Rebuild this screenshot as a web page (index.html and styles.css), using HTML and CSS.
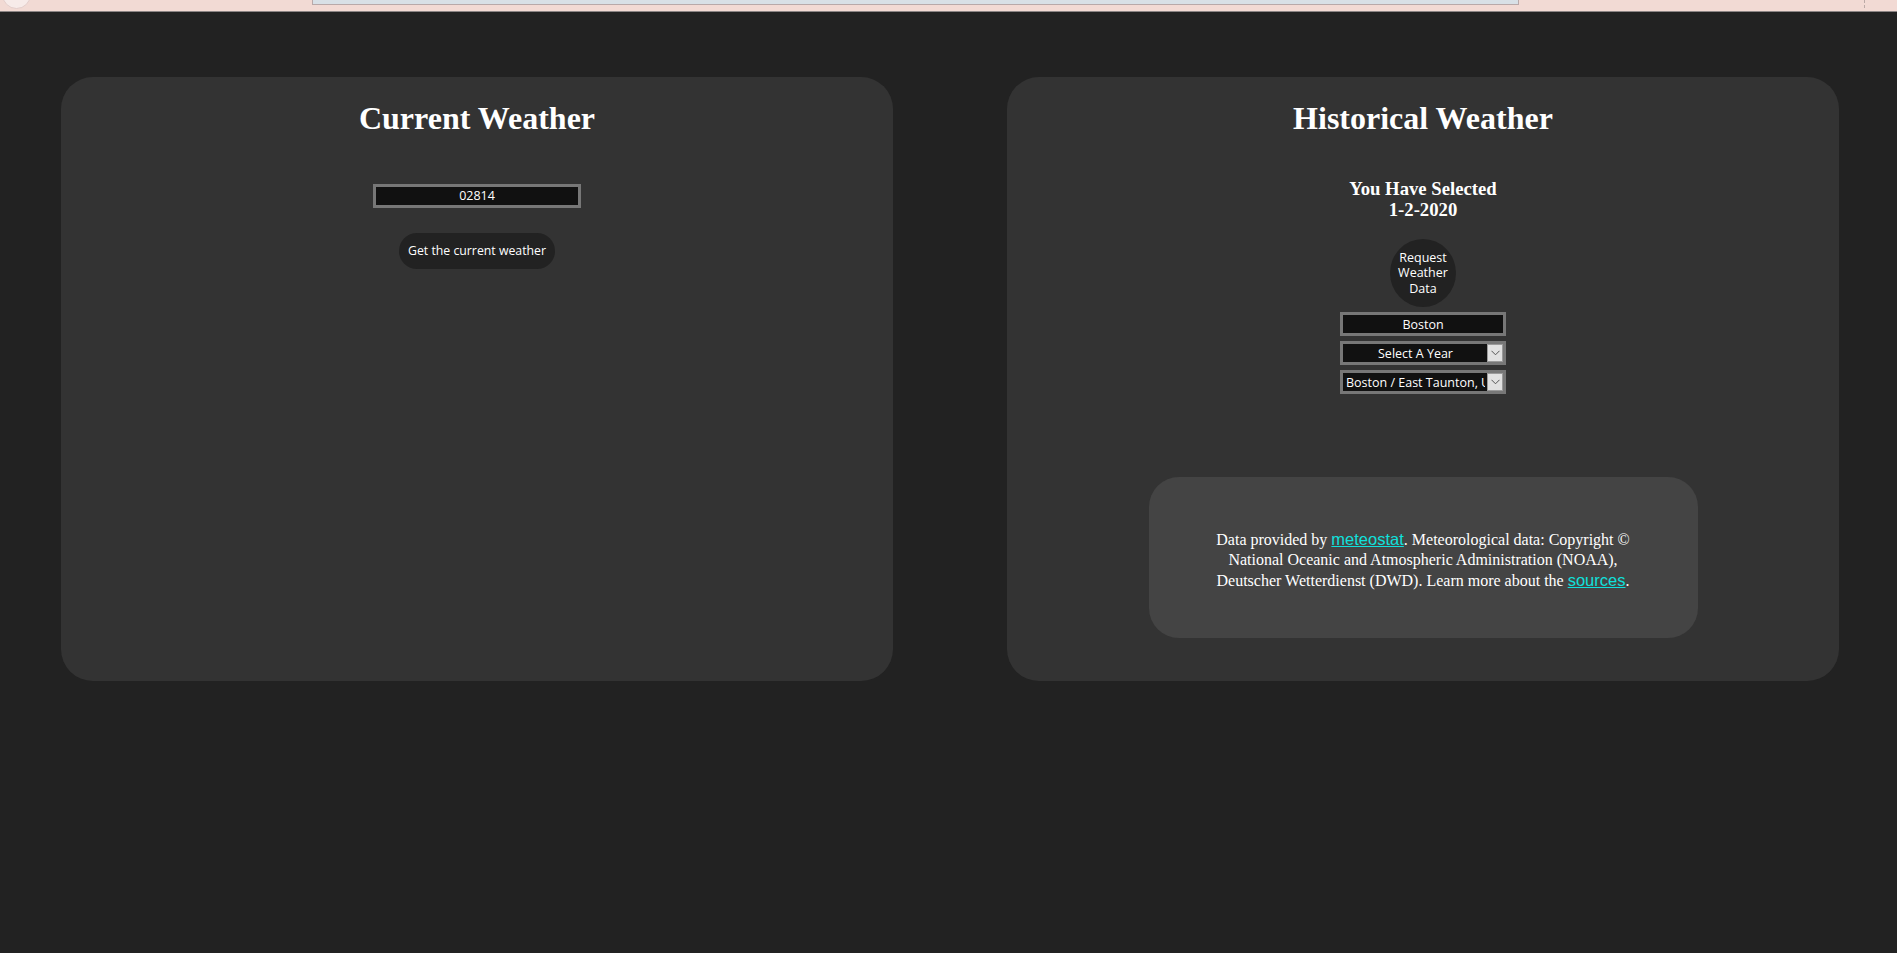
FILE: index.html
```html
<!DOCTYPE html>
<html lang="en">
<head>
<meta charset="utf-8">
<title>Weather</title>
<link rel="stylesheet" href="styles.css">
</head>
<body>
<div class="topbar">
  <span class="tb-circle"></span>
  <span class="tb-field"></span>
  <span class="tb-divider"></span>
</div>
<main class="main">
  <section class="panel">
    <h1 class="panel-title">Current Weather</h1>
    <input class="field zip" type="text" value="02814">
    <button class="pill-btn" type="button">Get the current weather</button>
  </section>
  <section class="panel">
    <h1 class="panel-title">Historical Weather</h1>
    <h3 class="selected">You Have Selected<br>1-2-2020</h3>
    <button class="circle-btn" type="button">Request<br>Weather<br>Data</button>
    <input class="field city" type="text" value="Boston">
    <div class="select-wrap">
      <select class="select centered"><option>Select A Year</option></select>
      <span class="select-arrow"><svg width="9" height="6" viewBox="0 0 9 6"><path d="M0.5 0.8 L4.5 4.8 L8.5 0.8" fill="none" stroke="#555" stroke-width="1"/></svg></span>
    </div>
    <div class="select-wrap">
      <select class="select"><option>Boston / East Taunton, US</option></select>
      <span class="select-arrow"><svg width="9" height="6" viewBox="0 0 9 6"><path d="M0.5 0.8 L4.5 4.8 L8.5 0.8" fill="none" stroke="#555" stroke-width="1"/></svg></span>
    </div>
    <div class="credits">
      <p class="credits-text">Data provided by <a class="credit-link" href="#">meteostat</a>. Meteorological data: Copyright &copy; National Oceanic and Atmospheric Administration (NOAA), Deutscher Wetterdienst (DWD). Learn more about the <a class="credit-link" href="#">sources</a>.</p>
    </div>
  </section>
</main>
</body>
</html>
```
FILE: styles.css
```css
html, body {
  margin: 0;
  padding: 0;
  background: #222222;
}

body {
  font-family: "Liberation Serif", "Times New Roman", serif;
  color: #ffffff;
  min-height: 953px;
}

.topbar {
  height: 11px;
  background: #f2dad4;
  border-bottom: 1px solid #8c8585;
  display: flex;
  align-items: flex-start;
  overflow: hidden;
}

.tb-circle {
  flex: none;
  width: 27px;
  height: 27px;
  margin-left: 2px;
  margin-top: -20px;
  border-radius: 50%;
  background: #f7ebe9;
  border: 1px solid #e3cdca;
}

.tb-field {
  flex: none;
  width: 1205px;
  height: 4px;
  margin-left: 281px;
  background: #d8e0e6;
  border: 1px solid #b8a9a9;
  border-top: none;
}

.tb-divider {
  flex: none;
  width: 0;
  height: 8px;
  margin-left: 345px;
  border-left: 1px dashed #bba9a6;
}

.main {
  display: flex;
  gap: 114px;
  padding: 65px 0 0 61px;
}

.panel {
  flex: none;
  width: 832px;
  height: 604px;
  background: #333333;
  border-radius: 32px;
  display: flex;
  flex-direction: column;
  align-items: center;
  text-align: center;
  box-sizing: border-box;
  padding-top: 2px;
}

.panel-title {
  font-size: 32px;
  font-weight: bold;
  margin: 21.44px 0;
  line-height: 37px;
}

.field {
  box-sizing: border-box;
  background: #111111;
  color: #ffffff;
  border: 3px solid #777777;
  font-family: "Open Sans", "Noto Sans", sans-serif;
  font-size: 12.5px;
  text-align: center;
  height: 24px;
  padding: 0 4px;
  margin: 0;
  outline: none;
}

.zip {
  width: 208px;
  margin-top: 25px;
}

.pill-btn {
  margin-top: 25px;
  height: 36px;
  padding: 0 9px;
  border: none;
  border-radius: 18px;
  background: #222222;
  color: #ffffff;
  font-family: "Open Sans", "Noto Sans", sans-serif;
  font-size: 12.3px;
}

.selected {
  font-size: 18.72px;
  font-weight: bold;
  line-height: 21.5px;
  margin: 18.72px 0;
}

.circle-btn {
  width: 66px;
  height: 68px;
  border-radius: 50%;
  border: none;
  background: #222222;
  color: #ffffff;
  font-family: "Open Sans", "Noto Sans", sans-serif;
  font-size: 12.5px;
  line-height: 15.7px;
  padding: 0;
}

.city {
  width: 166px;
  margin-top: 5px;
}

.select-wrap {
  position: relative;
  width: 166px;
  height: 24px;
  margin-top: 5px;
}

.select {
  appearance: none;
  -webkit-appearance: none;
  box-sizing: border-box;
  width: 166px;
  height: 24px;
  margin: 0;
  background: #111111;
  color: #ffffff;
  border: 3px solid #777777;
  border-radius: 0;
  font-family: "Open Sans", "Noto Sans", sans-serif;
  font-size: 12.5px;
  padding: 0 18px 0 3px;
  text-align: left;
  outline: none;
}

.select.centered {
  text-align-last: center;
}

.select-arrow {
  position: absolute;
  top: 3px;
  right: 3px;
  width: 16px;
  height: 18px;
  box-sizing: border-box;
  background: #e1e1e1;
  border: 1px solid #9a9a9a;
  display: flex;
  align-items: center;
  justify-content: center;
}

.credits {
  margin-top: 83px;
  width: 549px;
  height: 161px;
  box-sizing: border-box;
  background: #444444;
  border-radius: 30px;
  padding: 52px 60px 0;
}

.credits-text {
  margin: 0;
  font-size: 16px;
  line-height: 20px;
  color: #ffffff;
}

.credit-link {
  font-family: "Liberation Sans", Arial, sans-serif;
  font-size: 16.5px;
  line-height: 20px;
  color: #10e0dc;
  text-decoration: underline;
}
```
